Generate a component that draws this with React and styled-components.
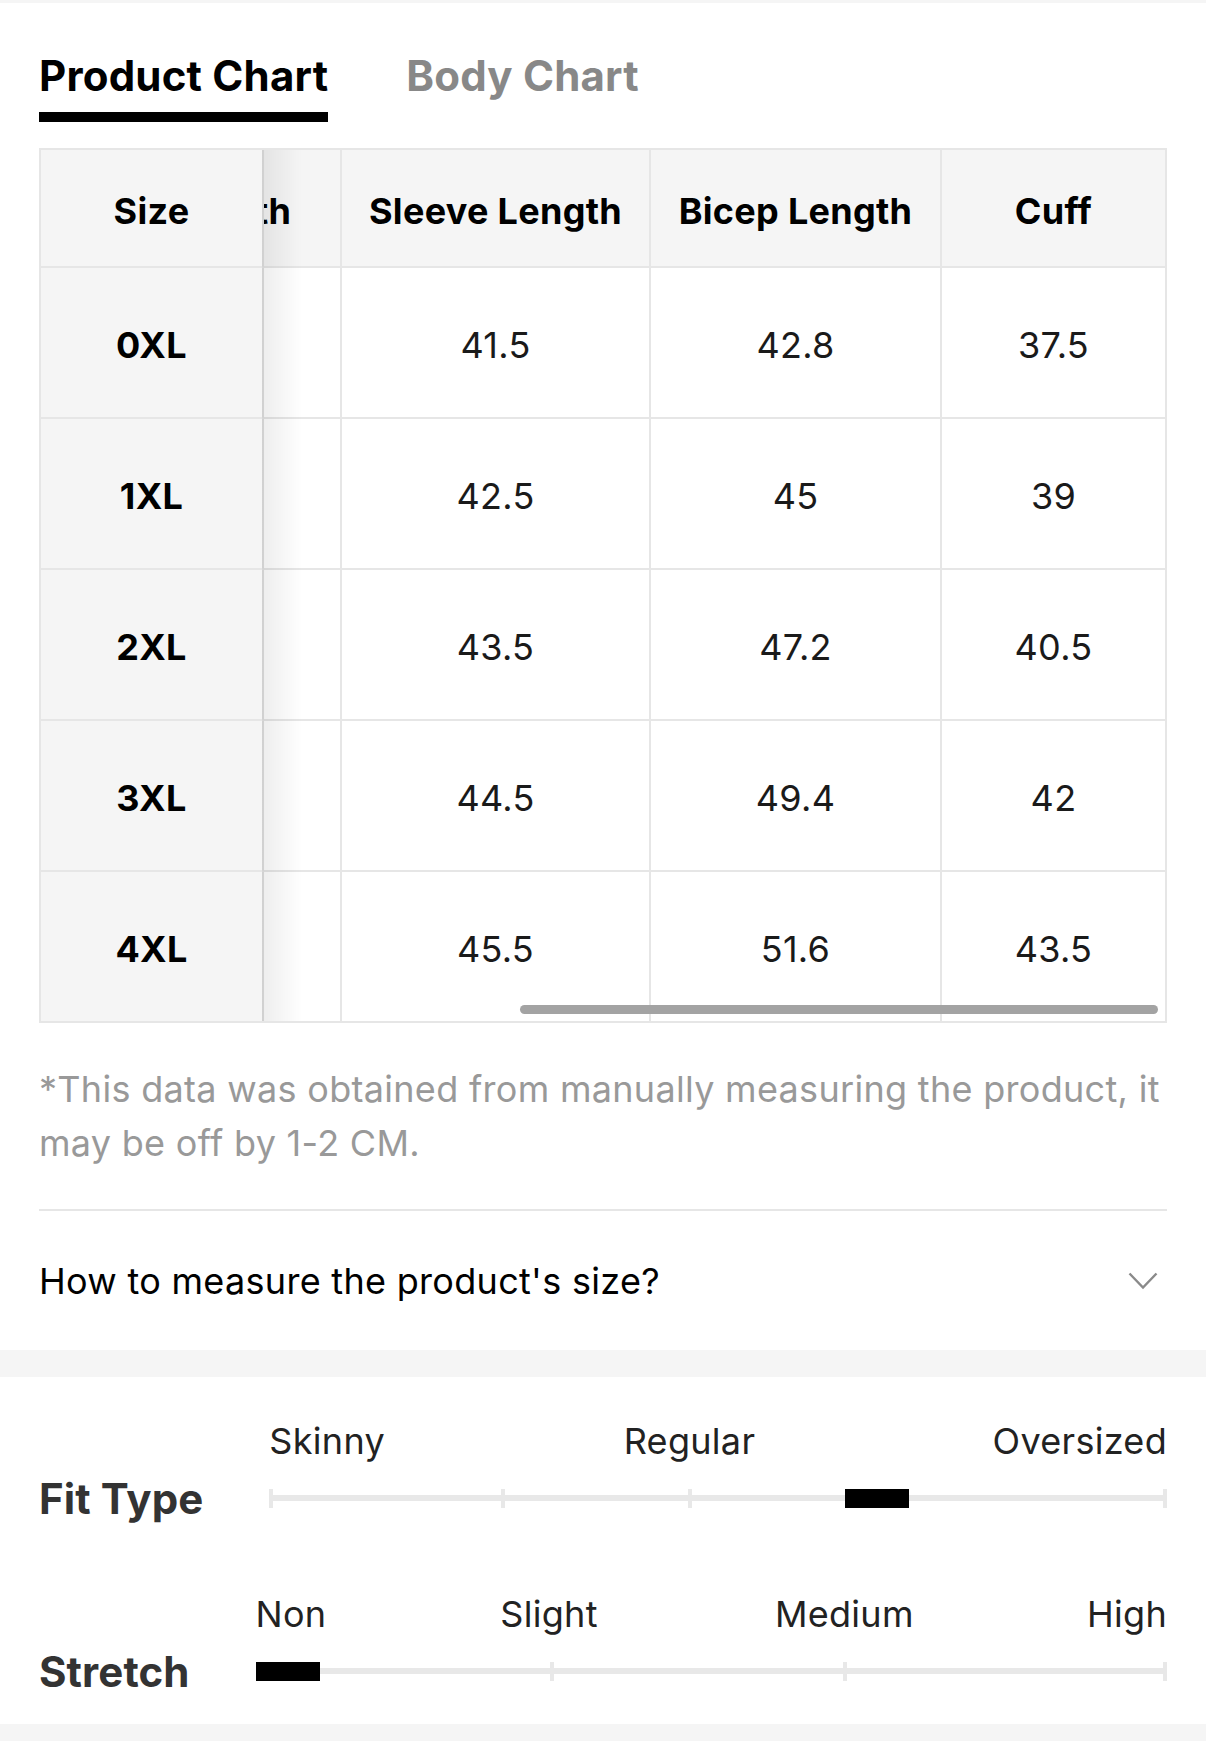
import React, { useLayoutEffect, useRef } from "react";
import styled, { createGlobalStyle } from "styled-components";

const GlobalStyle = createGlobalStyle`
  * { box-sizing: border-box; }
  body {
    margin: 0;
    background: #fff;
    font-family: Inter, "Noto Sans", "Liberation Sans", sans-serif;
    color: #000;
  }
`;

const columns = [
  { key: "size", label: "Size", width: 223 },
  { key: "shoulder", label: "Shoulder", width: 200 },
  { key: "bust", label: "Bust", width: 200 },
  { key: "length", label: "Length", width: 224 },
  { key: "sleeve", label: "Sleeve Length", width: 309 },
  { key: "bicep", label: "Bicep Length", width: 291 },
  { key: "cuff", label: "Cuff", width: 223 },
];

const tableWidth = columns.reduce((sum, c) => sum + c.width, 0);

const rows = [
  { size: "0XL", shoulder: "41", bust: "112", length: "66", sleeve: "41.5", bicep: "42.8", cuff: "37.5" },
  { size: "1XL", shoulder: "42.5", bust: "117", length: "67", sleeve: "42.5", bicep: "45", cuff: "39" },
  { size: "2XL", shoulder: "44", bust: "122", length: "68", sleeve: "43.5", bicep: "47.2", cuff: "40.5" },
  { size: "3XL", shoulder: "45.5", bust: "127", length: "69", sleeve: "44.5", bicep: "49.4", cuff: "42" },
  { size: "4XL", shoulder: "47", bust: "132", length: "70", sleeve: "45.5", bicep: "51.6", cuff: "43.5" },
];

const fitScales = [
  {
    title: "Fit Type",
    labels: [
      { text: "Skinny", at: 0, align: "left" },
      { text: "Regular", at: 0.468, align: "center" },
      { text: "Oversized", at: 1, align: "right" },
    ],
    ticks: [0, 0.259, 0.468, 1],
    thumb: 0.691,
  },
  {
    title: "Stretch",
    labels: [
      { text: "Non", at: 0, align: "left" },
      { text: "Slight", at: 0.322, align: "center" },
      { text: "Medium", at: 0.646, align: "center" },
      { text: "High", at: 1, align: "right" },
    ],
    ticks: [0, 0.325, 0.647, 1],
    thumb: 0,
  },
];

const Page = styled.div`
  width: 1206px;
  border-top: 3px solid #f5f5f5;
`;

const Section = styled.div`
  padding: 0 39px;
`;

const Tabs = styled.div`
  display: flex;
  gap: 78px;
  padding-top: 49px;
`;

const Tab = styled.div`
  font-size: 42px;
  font-weight: 700;
  line-height: 48px;
  padding-bottom: 12px;
  letter-spacing: 0.2px;
  color: ${(p) => (p.active ? "#000" : "#888")};
  border-bottom: 10px solid ${(p) => (p.active ? "#000" : "transparent")};
`;

const TableBox = styled.div`
  position: relative;
  margin-top: 26px;
  border: 2px solid #e6e6e6;
`;

const Scroller = styled.div`
  overflow-x: auto;
  scrollbar-width: none;
  &::-webkit-scrollbar { display: none; }
`;

const Table = styled.table`
  width: ${tableWidth}px;
  border-collapse: separate;
  border-spacing: 0;
  table-layout: fixed;
`;

const HeadRow = styled.tr`
  height: 118px;
`;

const BodyRow = styled.tr`
  height: ${(p) => (p.last ? 149 : 151)}px;
`;

const Cell = styled.td`
  padding: 5px 0 0;
  text-align: center;
  vertical-align: middle;
  white-space: nowrap;
  font-size: 36px;
  letter-spacing: 0.3px;
  font-weight: ${(p) => (p.head || p.sticky ? 700 : 400)};
  color: ${(p) => (p.head || p.sticky ? "#000" : "#1a1a1a")};
  background: ${(p) => (p.head || p.sticky ? "#f5f5f5" : "#fff")};
  border-right: ${(p) => (p.lastCol ? "none" : "2px solid #e6e6e6")};
  border-bottom: ${(p) => (p.lastRow ? "none" : "2px solid #e6e6e6")};
  ${(p) =>
    p.sticky &&
    `
    position: sticky;
    left: 0;
    z-index: 2;
    border-right-color: #e0e0e0;
    &::after {
      content: "";
      position: absolute;
      top: 0;
      bottom: -2px;
      left: 100%;
      width: 40px;
      background: linear-gradient(to right, rgba(0, 0, 0, 0.07), rgba(0, 0, 0, 0));
      pointer-events: none;
    }
  `}
`;

const ScrollThumb = styled.div`
  position: absolute;
  left: 479px;
  right: 7px;
  bottom: 7px;
  height: 9px;
  border-radius: 5px;
  background: #a3a3a3;
`;

const Note = styled.p`
  margin: 39px 0 0;
  font-size: 36px;
  letter-spacing: 0.3px;
  line-height: 54px;
  color: #999;
`;

const Divider = styled.div`
  margin-top: 39px;
  height: 2px;
  background: #e6e6e6;
`;

const Accordion = styled.div`
  height: 139px;
  display: flex;
  align-items: center;
  justify-content: space-between;
  font-size: 36px;
  letter-spacing: 0.3px;
  color: #000;
`;

const Chevron = styled.svg`
  width: 30px;
  height: 18px;
  margin-right: 9px;
`;

const Band = styled.div`
  height: ${(p) => p.h}px;
  background: #f5f5f5;
`;

const FitSection = styled.div`
  padding: 44px 39px 43px;
  display: flex;
  flex-direction: column;
  gap: 86px;
`;

const FitRow = styled.div`
  display: grid;
  grid-template-columns: auto 1fr;
  grid-template-rows: 40px 19px;
  column-gap: 66px;
  row-gap: 28px;
`;

const FitTitle = styled.div`
  grid-row: 2;
  grid-column: 1;
  align-self: center;
  font-size: 42px;
  letter-spacing: 0.1px;
  font-weight: 700;
  color: #333;
  line-height: 19px;
`;

const ScaleLabels = styled.div`
  grid-row: 1;
  grid-column: 2;
  position: relative;
`;

const ScaleLabel = styled.span`
  position: absolute;
  top: 0;
  font-size: 36px;
  letter-spacing: 0.3px;
  line-height: 40px;
  color: #222;
  white-space: nowrap;
  transform: translateX(${(p) => (p.align === "center" ? "-50%" : p.align === "right" ? "-100%" : "0")});
`;

const Track = styled.div`
  grid-row: 2;
  grid-column: 2;
  position: relative;
  &::before {
    content: "";
    position: absolute;
    left: 0;
    right: 0;
    top: 6px;
    height: 6px;
    background: #e8e8e8;
  }
`;

const Tick = styled.span`
  position: absolute;
  top: 0;
  width: 4px;
  height: 19px;
  background: #e8e8e8;
`;

const Thumb = styled.span`
  position: absolute;
  top: 0;
  width: 64px;
  height: 19px;
  background: #000;
`;

function SizeTable() {
  const ref = useRef(null);
  useLayoutEffect(() => {
    if (ref.current) ref.current.scrollLeft = ref.current.scrollWidth;
  }, []);

  return (
    <TableBox>
      <Scroller ref={ref}>
        <Table>
          <colgroup>
            {columns.map((c) => (
              <col key={c.key} style={{ width: c.width }} />
            ))}
          </colgroup>
          <thead>
            <HeadRow>
              {columns.map((c, i) => (
                <Cell as="th" key={c.key} head sticky={i === 0} lastCol={i === columns.length - 1}>
                  {c.label}
                </Cell>
              ))}
            </HeadRow>
          </thead>
          <tbody>
            {rows.map((r, ri) => {
              const lastRow = ri === rows.length - 1;
              return (
                <BodyRow key={r.size} last={lastRow}>
                  {columns.map((c, i) => (
                    <Cell
                      key={c.key}
                      sticky={i === 0}
                      lastCol={i === columns.length - 1}
                      lastRow={lastRow}
                    >
                      {r[c.key]}
                    </Cell>
                  ))}
                </BodyRow>
              );
            })}
          </tbody>
        </Table>
      </Scroller>
      <ScrollThumb />
    </TableBox>
  );
}

function FitScale({ scale }) {
  return (
    <FitRow>
      <FitTitle>{scale.title}</FitTitle>
      <ScaleLabels>
        {scale.labels.map((l) => (
          <ScaleLabel key={l.text} align={l.align} style={{ left: `${l.at * 100}%` }}>
            {l.text}
          </ScaleLabel>
        ))}
      </ScaleLabels>
      <Track>
        {scale.ticks.map((t) => (
          <Tick key={t} style={{ left: `calc(${t} * (100% - 4px))` }} />
        ))}
        <Thumb style={{ left: `calc(${scale.thumb} * (100% - 64px))` }} />
      </Track>
    </FitRow>
  );
}

export default function App() {
  return (
    <Page>
      <GlobalStyle />
      <Section>
        <Tabs>
          <Tab active>Product Chart</Tab>
          <Tab>Body Chart</Tab>
        </Tabs>
        <SizeTable />
        <Note>*This data was obtained from manually measuring the product, it may be off by 1-2 CM.</Note>
        <Divider />
        <Accordion>
          <span>How to measure the product's size?</span>
          <Chevron viewBox="0 0 30 18" fill="none">
            <polyline points="1.5,1.5 15,15.5 28.5,1.5" stroke="#8a8a8a" strokeWidth="2.4" />
          </Chevron>
        </Accordion>
      </Section>
      <Band h={27} />
      <FitSection>
        {fitScales.map((s) => (
          <FitScale key={s.title} scale={s} />
        ))}
      </FitSection>
      <Band h={18} />
    </Page>
  );
}
